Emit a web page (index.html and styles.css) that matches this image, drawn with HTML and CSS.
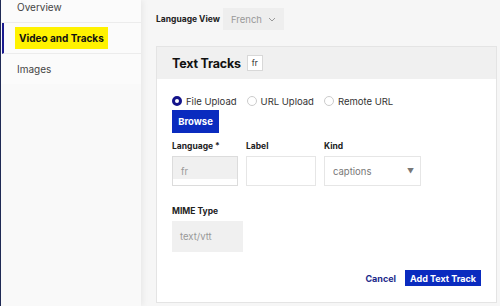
FILE: index.html
```html
<!DOCTYPE html>
<html lang="en">
<head>
    <meta charset="UTF-8">
    <title>Video and Tracks</title>
    <link rel="stylesheet" href="styles.css">
</head>
<body>

    <div class="sidebar">
        <ul class="nav">
            <li><span>Overview</span></li>
            <li class="active"><span>Video and Tracks</span></li>
            <li><span>Images</span></li>
        </ul>
    </div>

    <div class="main">
        <div class="lang-view">
            <span class="lang-label">Language View</span>
            <div class="lang-select">French
                <svg width="8" height="5" viewBox="0 0 8 5"><path d="M1 1l3 3 3-3" fill="none" stroke="#999" stroke-width="1"/></svg>
            </div>
        </div>

        <div class="card">
            <div class="card-head">
                <h2>Text Tracks</h2>
                <span class="badge">fr</span>
            </div>
            <div class="card-body">
                <div class="radios">
                    <label class="radio"><span class="dot on"></span>File Upload</label>
                    <label class="radio"><span class="dot"></span>URL Upload</label>
                    <label class="radio"><span class="dot"></span>Remote URL</label>
                </div>
                <button class="btn browse">Browse</button>

                <div class="fields">
                    <div class="field">
                        <div class="field-label">Language *</div>
                        <div class="input readonly lang">fr</div>
                    </div>
                    <div class="field">
                        <div class="field-label">Label</div>
                        <div class="input label-in"></div>
                    </div>
                    <div class="field">
                        <div class="field-label">Kind</div>
                        <div class="input kind">captions <span class="arrow">&#9660;</span></div>
                    </div>
                </div>

                <div class="field mime">
                    <div class="field-label">MIME Type</div>
                    <div class="input readonly mime-in">text/vtt</div>
                </div>

                <div class="actions">
                    <a class="cancel">Cancel</a>
                    <button class="btn add">Add Text Track</button>
                </div>
            </div>
        </div>
    </div>

</body>
</html>
```

FILE: styles.css
```css
body {
    margin: 0;
    height: 306px;
    overflow: hidden;
    display: flex;
    font-family: 'Inter', 'Liberation Sans', sans-serif;
    background: #f6f6f6;
    color: #222;
}

.sidebar {
    width: 140px;
    flex-shrink: 0;
    background: #f9f9f9;
    border-left: 1px solid #1f2a55;
    box-shadow: 2px 0 6px rgba(0, 0, 0, 0.06);
    position: relative;
    z-index: 1;
}

.nav {
    list-style: none;
    margin: -8px 0 0 0;
    padding: 0;
}

.nav li {
    height: 30px;
    display: flex;
    align-items: center;
    padding-left: 16px;
    border-bottom: 1px solid #ececec;
    font-size: 10px;
    color: #444;
    background: #fbfbfb;
}

.nav li:last-child {
    border-bottom: none;
}

.nav li.active {
    border-left: 2px solid #1b1b8f;
    padding-left: 11px;
    margin-left: 1px;
}

.nav li.active span {
    background: #fff200;
    color: #111;
    font-weight: 700;
    padding: 5px 4px;
}

.main {
    flex: 1;
    padding: 8px 3px 0 15px;
}

.lang-view {
    display: flex;
    align-items: center;
    height: 22px;
}

.lang-label {
    font-size: 8.5px;
    font-weight: 700;
    color: #222;
    width: 67px;
}

.lang-select {
    width: 61px;
    height: 22px;
    box-sizing: border-box;
    background: #eeeeee;
    padding-left: 8px;
    display: flex;
    align-items: center;
    gap: 6px;
    font-size: 9.5px;
    color: #999;
}

.card {
    margin-top: 16px;
    height: 257px;
    box-sizing: border-box;
    border: 1px solid #e4e4e4;
    background: #fff;
}

.card-head {
    height: 32px;
    background: #f0f0f0;
    display: flex;
    align-items: center;
    padding-left: 15px;
    gap: 6px;
}

.card-head h2 {
    margin: 0;
    font-size: 12.5px;
    font-weight: 700;
    color: #111;
    letter-spacing: -0.2px;
}

.badge {
    width: 16px;
    height: 16px;
    box-sizing: border-box;
    border: 1px solid #d8d8d8;
    background: #fff;
    font-size: 8px;
    display: flex;
    align-items: center;
    justify-content: center;
}

.card-body {
    padding: 15px 15px 0 15px;
}

.radios {
    display: flex;
    align-items: center;
    height: 14px;
}

.radio {
    display: flex;
    align-items: center;
    font-size: 9.5px;
    color: #333;
    margin-right: 10px;
}

.dot {
    width: 10px;
    height: 10px;
    box-sizing: border-box;
    border: 1px solid #ccc;
    border-radius: 50%;
    margin-right: 4px;
}

.dot.on {
    border: 3px solid #14148a;
}

.btn {
    border: none;
    background: #0a2bbf;
    color: #fff;
    font-family: inherit;
    font-weight: 700;
    padding: 0;
}

.browse {
    margin-top: 2px;
    width: 47px;
    height: 23px;
    font-size: 9.5px;
}

.fields {
    display: flex;
    gap: 8px;
    margin-top: 7px;
}

.field-label {
    font-size: 8.5px;
    font-weight: 700;
    color: #222;
    height: 16px;
    line-height: 12px;
}

.input {
    height: 30px;
    box-sizing: border-box;
    border: 1px solid #e6e6e6;
    display: flex;
    align-items: center;
    padding-left: 8px;
    font-size: 9.5px;
    color: #999;
}

.lang {
    width: 66px;
    background: linear-gradient(#f0f0f0 78%, #fff 78%);
    border-color: #dcdcdc;
}

.label-in {
    width: 70px;
}

.kind {
    width: 97px;
    color: #777;
    justify-content: space-between;
    padding-right: 6px;
}

.arrow {
    font-size: 7px;
    color: #777;
}

.mime {
    margin-top: 19px;
}

.mime-in {
    width: 71px;
    height: 31px;
    background: #f0f0f0;
    border: none;
    padding-left: 8px;
}

.actions {
    display: flex;
    justify-content: flex-end;
    align-items: center;
    gap: 9px;
    margin-top: 18px;
}

.cancel {
    font-size: 9px;
    font-weight: 700;
    color: #1b2a8a;
}

.add {
    width: 76px;
    height: 16px;
    font-size: 9px;
}
```
